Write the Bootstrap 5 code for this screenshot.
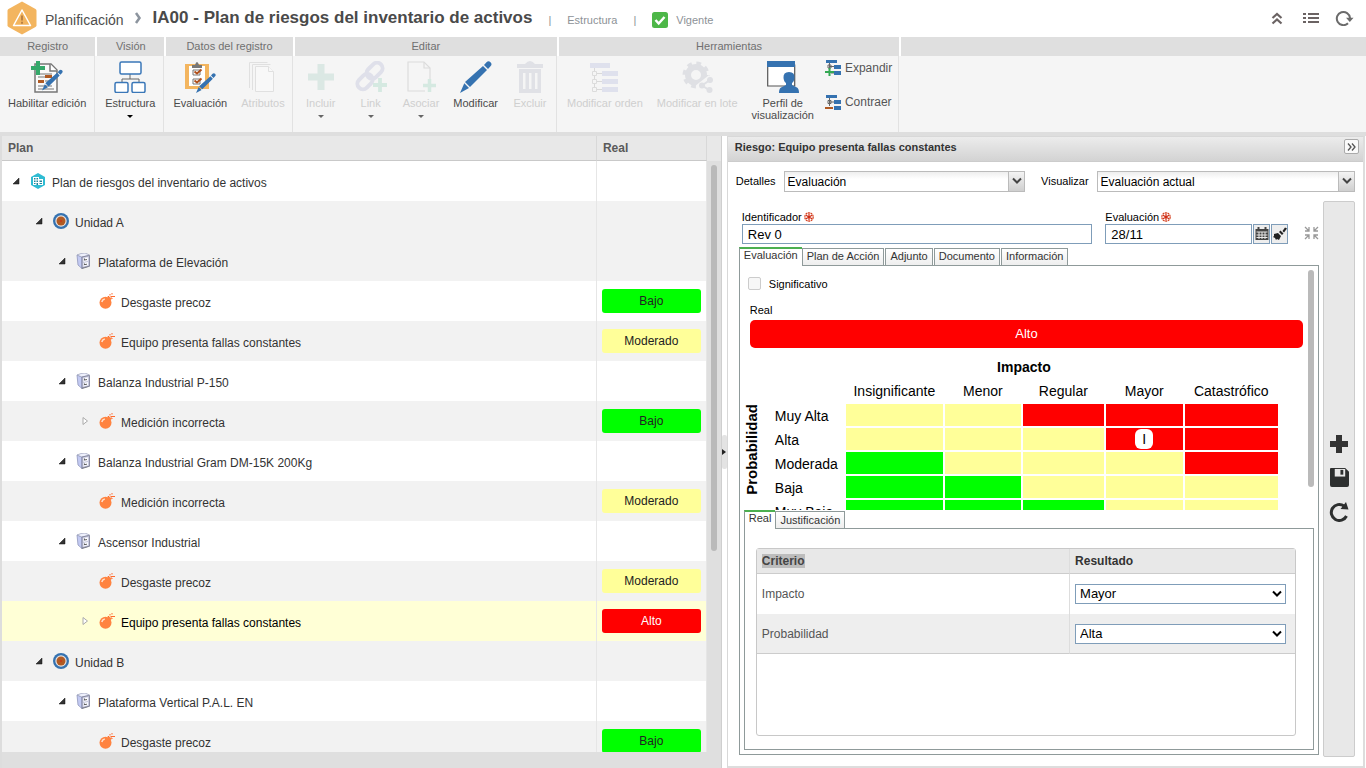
<!DOCTYPE html>
<html lang="es">
<head>
<meta charset="utf-8">
<meta name="viewport" content="width=device-width, initial-scale=1">
<title>IA00 - Plan de riesgos del inventario de activos</title>
<link rel="stylesheet" href="https://cdn.jsdelivr.net/npm/bootstrap@5.3.0/dist/css/bootstrap.min.css">
<style>
body{font-family:"Liberation Sans",Arial,sans-serif;font-size:12px;line-height:16px;color:#333;background:#fff}
svg{display:block;flex:none}
button,input,select{font-family:inherit}
a{text-decoration:none;color:inherit}
.topbar{height:37px;padding:0 12px 0 7px;color:#4d4d4d}
.crumb{font-size:14px}
.topbar h1{font-size:17px;line-height:20px;font-weight:700;color:#4a4a4a;margin:0}
.meta{font-size:11px;color:#8d9297}
.bare{border:0;background:none;padding:0;color:inherit}
/* ribbon */
.ribbon{background:#f5f5f5;border-bottom:4px solid #dedede}
.rgroup-title{height:19px;line-height:18px;background:#dfdfdf;border-right:2px solid #fff;font-size:11px;color:#707070;text-align:center}
.rgroup-body{height:76px;margin-right:2px;border-right:1px solid #e2e2e2;padding:0 1px}
.rgroup-body.tight{padding:0}
.rgroup-body.wide{padding:0 6px 0 1px}
.rbtn{border:0;background:none;padding:5px 7px 0;min-width:50px;font-size:11px;line-height:12px;color:#4a4a4a;display:flex;flex-direction:column;align-items:center;gap:4px}
.rbtn:disabled{color:#cfcfcf}
.rbtn .caret{border:3px solid transparent;border-top-color:#000;border-bottom:0;margin-top:2px}
.rbtn:disabled .caret{border-top-color:#666}
.rsmall{font-size:12px;line-height:16px;color:#555;gap:4px}
.rstack{gap:18px}
/* tree */
.plan-pane{flex:722 1 0;background:#dfdfdf;border-left:2px solid #ddd;border-right:1px solid #cfcfcf}
.tree{border-collapse:separate;border-spacing:0;table-layout:fixed}
.tree col.c-real{width:110px}
.tree th{height:25px;background:#e8e8e8;color:#5a5a5a;padding:0 6px;border-bottom:1px solid #c9c9c9;border-right:1px solid #d8d8d8}
.tree td{height:40px;padding:1px 5px 0;border-right:1px solid #e6e6e6;background:#fff}
.tree .alt td{background:#f2f2f2}
.tree .sel td{background:#ffffd6;color:#000}
.tree td:first-child{padding-left:calc(10px + 23px*var(--d))}
.d0{--d:0}.d1{--d:1}.d2{--d:2}.d3{--d:3}
.node{display:flex;align-items:center}
.node .tw{width:18px;height:10px;display:flex;align-items:center}
.node .txt{margin-left:6px;padding-top:3px}
.risk{display:block;height:24px;line-height:24px;border-radius:3px;text-align:center}
.lo{background:#0f0}.mid{background:#ff9;}.hi{background:red;color:#fff}
.tree .risk.lo,.tree .risk.mid{color:#222}
.track{width:14px;padding:4px 4px 0;border-top:25px solid #e8e8e8}
.thumb{width:6px;border-radius:3px;background:#bababa}
.split{width:5px;background:#fff}
.grip{width:5px;height:34px;background:#e3e3e3;border-radius:2px}
/* detail */
.detail{flex:638 1 0;border:1px solid #d8d8d8;border-right:2px solid #ddd;border-bottom:2px solid #ddd;color:#000;font-size:11px;margin-right:1px;min-width:0}
.detail-head{height:25px;padding:0 4px 4px 7px;background:linear-gradient(#ececec,#d3d3d3);border-bottom:1px solid #ccc;color:#333}
.detail-head h2{font-size:11px;line-height:14px;font-weight:700;margin:0}
.expand{width:15px;height:15px;border:1px solid #aaa;border-radius:2px;background:#fafafa;padding:0;display:flex;align-items:center;justify-content:center}
.selectors{padding:9px 8px 0}
.combo{position:relative;height:21px;border:1px solid #bbb;background:linear-gradient(#eee,#fff 7px)}
.combo.c1{flex:242 1 0}.combo.c2{flex:259 1 0}
.combo select{appearance:none;border:0;background:none;width:100%;height:19px;line-height:19px;font-size:12px;padding:1px 20px 0 3px;color:#000}
.combo .arr{position:absolute;right:0;top:0;width:16px;height:19px;border-left:1px solid #bbb;background:linear-gradient(#f4f4f4,#cfcfcf);color:#444;pointer-events:none;display:flex;align-items:center;justify-content:center}
.detail-body{padding:9px 8px 9px 11px;gap:4px}
.form-col{padding:10px 0 2px}
.fields{padding-left:3px;margin-bottom:3px}
.f-id{flex:351 1 0}.f-ev{flex:183 1 0;margin-left:13px}
.fld{height:20px;border:1px solid #7f9db9;padding:1px 5px 0;font-size:13px;width:100%;color:#000;background:#fff;min-width:0}
.flabel{line-height:13px;display:flex;align-items:center;gap:2px}
.ibtn{width:17px;height:20px;border:1px solid #7f9db9;background:#eee;padding:0;display:flex;align-items:center;justify-content:center;flex:none}
.tabs{gap:1px;padding:0;list-style:none;margin:0 0 -1px;position:relative;align-items:flex-end}
.tabs button{height:18px;border:1px solid #8f9a9a;background:linear-gradient(#fff,#eee);font-size:11px;line-height:14px;padding:0 4px 1px;color:#333;display:block}
.tabs button.active{height:19px;border-bottom:0;border-right:0;border-top:2px solid #4caf50;background:#fff;line-height:12px;padding:0 4px 5px}
.tabs li:first-child{margin-right:-1px}
.box{border:1px solid #8f9a9a}
.mscroll{overflow:hidden;flex:1 1 0;min-height:0}
.bigrisk{height:28px;line-height:28px;border-radius:5px;font-size:13px;text-align:center;margin:2px 5px 0 10px}
.sig-row{padding:10px 0 0 8px}
.real-row{padding:10px 0 0 10px}
.sig{width:13px;height:13px;margin:0;border:1px solid #ccc;border-radius:2px;appearance:none;background:#f7f7f7}
.mtitle{font-size:14px;line-height:22px;font-weight:700;text-align:center}
.matrix{border-collapse:separate;border-spacing:2px;font-size:14px;table-layout:fixed;width:538px;margin-left:2px}
.matrix th,.matrix td{height:22px;padding:0;font-weight:400;line-height:20px}
.matrix thead th{text-align:center}
.matrix tbody th{padding-left:13px;padding-top:2px}
.matrix tbody th.vert{padding:0;vertical-align:top}
.vert span{writing-mode:vertical-rl;transform:rotate(180deg);font-weight:700;font-size:15px;line-height:16px;display:block}
.m1{width:16px}.m2{width:82px}.m3{width:97px}.m4{width:76px}.m5{width:81px}.m6{width:77px}.m7{width:93px}
.pin{display:block;width:18px;height:20px;line-height:20px;margin:auto;background:#fff;border-radius:6px;text-align:center}
.crit{border:1px solid #c8c8c8;border-radius:3px;min-height:188px;margin:19px 17px 13px 11px;font-size:12px}
.crit table{border-collapse:separate;border-spacing:0;table-layout:fixed;width:100%}
.crit col.c-res{width:226px}
.crit th{height:25px;background:#e8e8e8;border-bottom:1px solid #ccc;padding:0 5px;color:#333}
.crit td{height:40px;padding:0 5px;color:#555}
.crit tr:last-child td{background:#eee;border-bottom:1px solid #ccc}
.crit tr>*+*{border-left:1px solid #ddd}
.crit th mark{background:#bdbdbd;color:#444;padding:0}
.crit .sel-wrap{position:relative;width:211px;color:#000}
.crit select{appearance:none;width:100%;height:20px;border:1px solid #7f9db9;font-size:13px;line-height:16px;padding:0 4px;background:#fff;color:#000;display:block}
.crit .sel-wrap svg{position:absolute;right:4px;top:6px;pointer-events:none}
.side{width:32px;background:#e8e8e8;border:1px solid #ccc;border-radius:2px;gap:15px;color:#333}
</style>
</head>
<body class="vh-100 d-flex flex-column overflow-hidden">
<svg width="0" height="0" class="position-absolute" aria-hidden="true">
 <symbol id="plus" viewBox="0 0 26 26"><path d="M9.500 0h7v9.500H26v7h-9.500V26h-7v-9.500H0v-7h9.500z"/></symbol>
 <symbol id="pencil" viewBox="0 0 32 32"><path d="M23 5l4 4L10 26l-5-5zM24 4l2.500-2.800q2-2 4 0t0 4L28 8zM4.300 22.300l4.700 4.700L0 32z"/></symbol>
 <symbol id="open" viewBox="0 0 8 8"><path d="M7 1v6H1z" fill="#333" stroke="#111" stroke-width=".5"/></symbol>
 <symbol id="closed" viewBox="0 0 8 10"><path d="M2 1.500v7L6.500 5z" fill="#fff" stroke="#aaa"/></symbol>
 <symbol id="plan" viewBox="0 0 16 16"><path d="M8 0l7 4v8l-7 4-7-4V4z" fill="#2fbcd3"/><path d="M3 4h6v2h4v6H3z" fill="#fff"/><path d="M4 5h1.500v1.500H4zM6.500 5H8v1.500H6.500zM4 7.500h1.500v1.500H4zM6.500 7.500H8v1.500H6.500zM9.500 7.500h2.500v1.500H9.500zM4 10h1.500v1H4zM6.500 10H8v2H6.500zM9.500 10H12v1H9.500z" fill="#23859a"/></symbol>
 <symbol id="unit" viewBox="0 0 16 16"><circle cx="8" cy="8" r="8" fill="#3572b0"/><circle cx="8" cy="8" r="5.700" fill="#e9e5e2"/><circle cx="8" cy="8" r="4.500" fill="#b05a23"/><circle cx="8" cy="8" r=".7" fill="#e01010"/></symbol>
 <symbol id="asset" viewBox="0 0 16 16"><path d="M5 15l8-2 1 .5-8 2.500z" fill="#777"/><path d="M1 2l5 2v11.500L2 12z" fill="#c3caf2" stroke="#8f95bb" stroke-width=".8"/><path d="M1 2q4-2 8-2l4.500 2L6 4z" fill="#eef0fc" stroke="#9a9fba" stroke-width=".7"/><path d="M6 4l7.500-1.500V13L6 15z" fill="#c9cbdf" stroke="#777a92" stroke-width=".8"/><path d="M7.500 5l4.500-.8v3.600L7.500 9zM7.500 10l4.500-1v3.300l-4.500 1.200z" fill="#fafaff"/><path d="M8.500 7.300V5.500M8.500 7l2.500-.5M8.500 12v-1.500M8.500 11.700l2.500-.5" stroke="#555" stroke-width=".9"/></symbol>
 <symbol id="bomb" viewBox="0 0 16 16"><circle cx="6.500" cy="9.800" r="6" fill="#ff8340"/><path d="M8 4l3.800 3.200 1-1.800L9.500 3z" fill="#ff8340"/><path d="M11 1v1.500M9 3.500h1M11.500 3.500l1 1M12 3.500h4M13 6v-1M13 0v1.500" stroke="#ff6b2e" fill="none"/><path d="M2.800 9q.5-2.500 3-3" stroke="#ffe0cf" stroke-width="1.500" fill="none"/></symbol>
 <symbol id="req" viewBox="0 0 10 10"><circle cx="5" cy="5" r="4.200" fill="none" stroke="#d5401f" stroke-width="1.200" stroke-dasharray="2 .6"/><path d="M5 1.500v7M2 3.200l6 3.600M8 3.200L2 6.800" stroke="#cf2b12" stroke-width="1.200"/></symbol>
 <symbol id="chev" viewBox="0 0 10 8"><path d="M1 1.500l4 4 4-4" fill="none" stroke="currentColor" stroke-width="2"/></symbol>
</svg>

<header class="topbar d-flex align-items-center">
 <svg width="30" height="34" viewBox="0 0 30 34"><path d="M15 .5L28.500 8q1 .6 1 1.800v14.400q0 1.200-1 1.800L15 33.500 1.500 26q-1-.6-1-1.800V9.800q0-1.200 1-1.800z" fill="#f3b55f"/><path d="M15 9l8.500 15.500h-17z" fill="none" stroke="#fff" stroke-width="1.500" stroke-linejoin="round"/><path d="M15 14.500v5M15 20.800v2" stroke="#a9703a" stroke-width="1.500"/></svg>
 <a href="#" class="crumb ms-2 pt-1">Planificación</a>
 <svg class="mx-2" width="13" height="12" viewBox="0 0 13 12"><path d="M4 1l3.500 5L4 11" fill="none" stroke="#8c949e" stroke-width="2.500"/></svg>
 <h1>IA00 - Plan de riesgos del inventario de activos</h1>
 <div class="meta d-flex align-items-center pt-1"><span class="mx-3">|</span><span>Estructura</span><span class="ms-3 me-3">|</span>
 <svg width="16" height="16" viewBox="0 0 16 16"><rect width="16" height="16" rx="2.500" fill="#4db748"/><path d="M3.500 8l3.200 3.500L12.500 5" fill="none" stroke="#fff" stroke-width="2.500"/></svg>
 <span class="ms-1 ps-1">Vigente</span></div>
 <div class="ms-auto d-flex align-items-center gap-3">
  <button class="bare me-1" aria-label="Ocultar"><svg width="12" height="14" viewBox="0 0 12 14"><path d="M1.500 7L6 3l4.500 4M1.500 12.500L6 8.500l4.500 4" fill="none" stroke="#6b6363" stroke-width="2.200"/></svg></button>
  <button class="bare" aria-label="Lista"><svg width="16" height="12" viewBox="0 0 16 12"><path d="M0 2h3M5 2h11M0 6h3M5 6h11M0 10h3M5 10h11" stroke="#6b6363" stroke-width="2"/></svg></button>
  <button class="bare" aria-label="Actualizar"><svg width="19" height="16" viewBox="0 0 19 16"><path d="M13 13.300A6.600 6.600 0 1 1 15 8" fill="none" stroke="#6b6b6b" stroke-width="2"/><path d="M11 7.800h7.500L14.800 12z" fill="#6b6b6b"/></svg></button>
 </div>
</header>

<nav class="ribbon d-flex" aria-label="Acciones">
 <section><div class="rgroup-title">Registro</div><div class="rgroup-body d-flex">
  <button class="rbtn"><svg width="32" height="32" viewBox="0 0 32 32"><path d="M4 3h16l6 6v22H4z" fill="#fafafa" stroke="#777" stroke-width="1.500"/><path d="M19 3v7h7" fill="#fff" stroke="#777" stroke-width="1.500"/><path d="M7 13h14M7 16h10M14 20h8M7 25h14M7 28h16" stroke="#777"/><path d="M14 14h7v3h-7zM7 19h6v3H7z" fill="#b05a23"/><path d="M5 0h4v5h5v4H9v5H5V9H0V5h5z" fill="#34a86a"/><use href="#pencil" x="11" y="8" width="21" height="22" fill="#3572b0"/></svg>Habilitar edición</button>
 </div></section>
 <section><div class="rgroup-title">Visión</div><div class="rgroup-body d-flex">
  <button class="rbtn"><svg width="32" height="32" viewBox="0 0 32 32"><path d="M16 13v5M8 21v-3h17v3" fill="none" stroke="#666"/><g fill="#fff" stroke="#3a77b8" stroke-width="1.500"><rect x="6" y="1" width="21" height="12" rx="1.500"/><rect x="1" y="21.500" width="13" height="10" rx="1.500"/><rect x="18" y="21.500" width="13" height="10" rx="1.500"/></g></svg>Estructura<span class="caret"></span></button>
 </div></section>
 <section><div class="rgroup-title">Datos del registro</div><div class="rgroup-body tight d-flex">
  <button class="rbtn"><svg width="32" height="32" viewBox="0 0 32 32"><path d="M1 3h24v25H1z" fill="#f3b55f"/><path d="M5 5h16v20H5z" fill="#fff"/><path d="M8 4h3q2-6 4 0h3v3H8z" fill="#777"/><path d="M9 9h7v5H9zM9 18h7v5H9z" fill="none" stroke="#777"/><path d="M10.500 10.500l2.500 2 4.500-4M10.500 19.500l2.500 2 4.500-4" fill="none" stroke="#b0501c" stroke-width="2"/><use href="#pencil" x="12" y="12" width="20" height="20" fill="#3572b0"/></svg>Evaluación</button>
  <button class="rbtn" disabled><svg width="32" height="32" viewBox="0 0 32 32" fill="#f8f8f8" stroke="#e0e0e0"><path d="M2.500 27V1.500h18M5.500 29V3.500h18" fill="none"/><path d="M8.500 5.500h13l5 5v20h-18z"/><path d="M21.500 5.500v5h5"/></svg>Atributos</button>
 </div></section>
 <section><div class="rgroup-title">Editar</div><div class="rgroup-body d-flex">
  <button class="rbtn" disabled><svg width="32" height="32" viewBox="0 0 32 32"><use href="#plus" x="3" y="3" width="26" height="26" fill="#dbe8e4"/></svg>Incluir<span class="caret"></span></button>
  <button class="rbtn" disabled><svg width="32" height="32" viewBox="0 0 32 32"><g transform="rotate(-45 15 15)" fill="none" stroke="#dfe0ea" stroke-width="4"><rect x="-1" y="10" width="17" height="11" rx="5.500"/><rect x="13" y="9" width="18" height="11" rx="5.500"/></g><use href="#plus" x="18" y="17" width="14" height="14" fill="#d5e9e1"/></svg>Link<span class="caret"></span></button>
  <button class="rbtn" disabled><svg width="32" height="32" viewBox="0 0 32 32" fill="none" stroke="#dcdcdc" stroke-width="1.200"><path d="M25 18V7l-6-6H3v29h17"/><path d="M19 1v6h6"/><use href="#plus" x="18" y="18" width="13" height="13" fill="#d5e9e1" stroke="none"/></svg>Asociar<span class="caret"></span></button>
  <button class="rbtn"><svg width="32" height="32" fill="#3572b0"><use href="#pencil" width="32" height="32"/></svg>Modificar</button>
  <button class="rbtn" disabled><svg width="32" height="32" viewBox="0 0 32 32" fill="#e0e1e6"><path d="M3 3h8q5-6 10 0h8v4H3z"/><path fill-rule="evenodd" d="M5 8h22v24H5zM9 12v16h2.500V12zm6 0v16h2.500V12zm6 0v16h2.500V12z"/></svg>Excluir</button>
 </div></section>
 <section><div class="rgroup-title">Herramientas</div><div class="rgroup-body wide d-flex">
  <button class="rbtn" disabled><svg width="32" height="32" viewBox="0 0 32 32"><path d="M1 2h20v5H1zM13 10h16v5H13zM13 18h16v5H13zM13 26h16v5H13z" fill="#dfe1ed"/><path d="M5.500 7v4M5.500 14v5M5.500 22v5M8 12.500h5M8 20.500h5M8 28.500h5" stroke="#d9d9d9"/><path d="M3.500 10.500h4v4h-4zM3.500 18.500h4v4h-4zM3.500 26.500h4v4h-4z" fill="none" stroke="#dcdcdc"/></svg>Modificar orden</button>
  <button class="rbtn" disabled><svg width="32" height="32" viewBox="0 0 32 32"><circle cx="15" cy="14" r="8" fill="none" stroke="#dfe0e4" stroke-width="6"/><circle cx="15" cy="14" r="11.500" fill="none" stroke="#dfe0e4" stroke-width="4" stroke-dasharray="4.600 4.430"/><path d="M30 17L21 24l9 5" fill="none" stroke="#f5f5f5" stroke-width="7"/><path d="M29 19L21 24.500 28 29" fill="none" stroke="#dfe0e4" stroke-width="2"/><g fill="#dfe0e4"><circle cx="29" cy="19" r="3"/><circle cx="21" cy="24.500" r="3"/><circle cx="28.500" cy="29" r="3"/></g></svg>Modificar en lote</button>
  <button class="rbtn"><svg width="32" height="32" viewBox="0 0 32 32"><path d="M.7 4h27v21H.7z" fill="#fff" stroke="#555" stroke-width="1.200"/><path d="M0 0h28v6H0z" fill="#3572b0"/><path d="M22 11q6 0 5.500 6-.5 4-2.500 5v2l5 2.500q2 1 2 5.500H12q0-4.500 2-5.500l5-2.500v-2q-2-1-2.500-5-.5-6 5.500-6z" fill="#3572b0"/></svg><span>Perfil de<br>visualización</span></button>
  <div class="rstack d-flex flex-column pt-1">
   <button class="bare rsmall d-flex ms-1"><svg width="16" height="16" viewBox="0 0 16 16"><path d="M1 0h11v3H1zM9 5h7v4H9zM9 11h7v4H9z" fill="#3572b0"/><path d="M4.500 3v10M4.500 6.500H9M6 13h3M3 5h3v3H3z" fill="#fff" stroke="#666"/><path d="M3.500 8h2v3H9v2H5.500v3h-2v-3H0v-2h3.500z" fill="#34a853"/></svg>Expandir</button>
   <button class="bare rsmall d-flex ms-1"><svg width="16" height="16" viewBox="0 0 16 16"><path d="M1 1h11v3H1zM9 6h7v4H9zM9 12h7v4H9z" fill="#3572b0"/><path d="M4.500 4v8M4.500 8H9M3 6.500h3v3H3z" fill="#fff" stroke="#666"/><path d="M0 13h8v2H0z" fill="#b05a23"/></svg>Contraer</button>
  </div>
 </div></section>
 <section class="flex-grow-1"><div class="rgroup-title border-0"></div></section>
</nav>

<main class="d-flex flex-grow-1 overflow-hidden">
 <section class="plan-pane d-flex overflow-hidden" aria-label="Plan">
  <div class="flex-grow-1 overflow-hidden mb-3">
  <table class="tree w-100">
   <colgroup><col><col class="c-real"></colgroup>
   <thead><tr><th>Plan</th><th>Real</th></tr></thead>
   <tbody>
    <tr class="d0"><td><div class="node"><span class="tw"><svg width="8" height="8"><use href="#open"/></svg></span><svg width="16" height="16"><use href="#plan"/></svg><span class="txt">Plan de riesgos del inventario de activos</span></div></td><td></td></tr>
    <tr class="d1 alt"><td><div class="node"><span class="tw"><svg width="8" height="8"><use href="#open"/></svg></span><svg width="16" height="16"><use href="#unit"/></svg><span class="txt">Unidad A</span></div></td><td></td></tr>
    <tr class="d2 alt"><td><div class="node"><span class="tw"><svg width="8" height="8"><use href="#open"/></svg></span><svg width="16" height="16"><use href="#asset"/></svg><span class="txt">Plataforma de Elevación</span></div></td><td></td></tr>
    <tr class="d3"><td><div class="node"><span class="tw"></span><svg width="16" height="16"><use href="#bomb"/></svg><span class="txt">Desgaste precoz</span></div></td><td><span class="risk lo">Bajo</span></td></tr>
    <tr class="d3 alt"><td><div class="node"><span class="tw"></span><svg width="16" height="16"><use href="#bomb"/></svg><span class="txt">Equipo presenta fallas constantes</span></div></td><td><span class="risk mid">Moderado</span></td></tr>
    <tr class="d2"><td><div class="node"><span class="tw"><svg width="8" height="8"><use href="#open"/></svg></span><svg width="16" height="16"><use href="#asset"/></svg><span class="txt">Balanza Industrial P-150</span></div></td><td></td></tr>
    <tr class="d3 alt"><td><div class="node"><span class="tw"><svg width="8" height="10"><use href="#closed"/></svg></span><svg width="16" height="16"><use href="#bomb"/></svg><span class="txt">Medición incorrecta</span></div></td><td><span class="risk lo">Bajo</span></td></tr>
    <tr class="d2"><td><div class="node"><span class="tw"><svg width="8" height="8"><use href="#open"/></svg></span><svg width="16" height="16"><use href="#asset"/></svg><span class="txt">Balanza Industrial Gram DM-15K 200Kg</span></div></td><td></td></tr>
    <tr class="d3 alt"><td><div class="node"><span class="tw"></span><svg width="16" height="16"><use href="#bomb"/></svg><span class="txt">Medición incorrecta</span></div></td><td><span class="risk mid">Moderado</span></td></tr>
    <tr class="d2"><td><div class="node"><span class="tw"><svg width="8" height="8"><use href="#open"/></svg></span><svg width="16" height="16"><use href="#asset"/></svg><span class="txt">Ascensor Industrial</span></div></td><td></td></tr>
    <tr class="d3 alt"><td><div class="node"><span class="tw"></span><svg width="16" height="16"><use href="#bomb"/></svg><span class="txt">Desgaste precoz</span></div></td><td><span class="risk mid">Moderado</span></td></tr>
    <tr class="d3 sel"><td><div class="node"><span class="tw"><svg width="8" height="10"><use href="#closed"/></svg></span><svg width="16" height="16"><use href="#bomb"/></svg><span class="txt">Equipo presenta fallas constantes</span></div></td><td><span class="risk hi">Alto</span></td></tr>
    <tr class="d1 alt"><td><div class="node"><span class="tw"><svg width="8" height="8"><use href="#open"/></svg></span><svg width="16" height="16"><use href="#unit"/></svg><span class="txt">Unidad B</span></div></td><td></td></tr>
    <tr class="d2"><td><div class="node"><span class="tw"><svg width="8" height="8"><use href="#open"/></svg></span><svg width="16" height="16"><use href="#asset"/></svg><span class="txt">Plataforma Vertical P.A.L. EN</span></div></td><td></td></tr>
    <tr class="d3 alt"><td><div class="node"><span class="tw"></span><svg width="16" height="16"><use href="#bomb"/></svg><span class="txt">Desgaste precoz</span></div></td><td><span class="risk lo">Bajo</span></td></tr>
   </tbody>
  </table>
  </div>
  <div class="track"><div class="thumb" style="height:64%"></div></div>
 </section>
 <div class="split d-flex align-items-center"><div class="grip d-flex align-items-center"><svg width="4" height="6" viewBox="0 0 4 6"><path d="M0 0l4 3-4 3z" fill="#222"/></svg></div></div>

 <section class="detail d-flex flex-column">
  <div class="detail-head d-flex align-items-center justify-content-between"><h2>Riesgo: Equipo presenta fallas constantes</h2>
   <button class="expand" aria-label="Ocultar panel"><svg width="9" height="8" viewBox="0 0 9 8"><path d="M1 .5L4 4 1 7.500M5 .5L8 4 5 7.500" fill="none" stroke="#555" stroke-width="1.300"/></svg></button></div>
  <div class="selectors d-flex align-items-center">
   <label for="det">Detalles</label>
   <div class="combo c1 ms-2"><select id="det"><option>Evaluación</option></select><span class="arr"><svg width="10" height="8"><use href="#chev"/></svg></span></div>
   <label for="vis" class="ms-3">Visualizar</label>
   <div class="combo c2 ms-2"><select id="vis"><option>Evaluación actual</option></select><span class="arr"><svg width="10" height="8"><use href="#chev"/></svg></span></div>
  </div>
  <div class="detail-body d-flex flex-grow-1 overflow-hidden">
   <div class="form-col d-flex flex-column flex-grow-1 overflow-hidden">
    <div class="fields d-flex align-items-end">
     <div class="f-id"><label class="flabel" for="ident">Identificador<svg width="10" height="10"><use href="#req"/></svg></label><input id="ident" class="fld" value="Rev 0"></div>
     <div class="f-ev"><label class="flabel" for="fecha">Evaluación<svg width="10" height="10"><use href="#req"/></svg></label>
      <div class="d-flex" style="gap:1px"><input id="fecha" class="fld" value="28/11">
       <button class="ibtn" aria-label="Calendario"><svg width="14" height="14" viewBox="0 0 14 14"><path d="M.5 2h13v11H.5z" fill="#444"/><path d="M3.500 0v3M10.500 0v3" stroke="#444" stroke-width="2"/><path d="M1.500 5h11M1.500 8h11M1.500 10.500h11M4 5v7M7 5v7M10 5v7" stroke="#e8e8e8"/></svg></button>
       <button class="ibtn" aria-label="Limpiar"><svg width="14" height="14" viewBox="0 0 14 14"><path d="M1 7l4-1 3 3-2 4-2-1-1 1-1-2-2-1 1-1zM6 5l1.500-1.500 3 3L9 8zM9.500 4L12 .5l2 1L11 5.500z" fill="#222"/></svg></button></div></div>
     <svg class="ms-3 mb-1" width="15" height="14" viewBox="0 0 15 14" fill="none" stroke="#999" stroke-width="1.300"><path d="M1 1l3.500 3.500M5 1v4H1M14 1l-3.500 3.500M10 1v4h4M1 13l3.500-3.500M5 13V9H1M14 13l-3.500-3.500M10 13V9h4"/></svg>
    </div>
    <ul class="tabs d-flex"><li><button class="active">Evaluación</button></li><li><button>Plan de Acción</button></li><li><button>Adjunto</button></li><li><button>Documento</button></li><li><button>Información</button></li></ul>
    <div class="box d-flex flex-column flex-grow-1 overflow-hidden">
     <div class="mscroll d-flex">
      <div class="flex-grow-1">
       <div class="sig-row d-flex align-items-center gap-2"><input class="sig" type="checkbox" id="sig"><label for="sig">Significativo</label></div>
       <div class="real-row">Real</div>
       <div class="bigrisk hi">Alto</div>
       <div class="mtitle pt-2">Impacto</div>
       <table class="matrix">
        <colgroup><col class="m1"><col class="m2"><col class="m3"><col class="m4"><col class="m5"><col class="m6"><col class="m7"></colgroup>
        <thead><tr><th></th><th></th><th>Insignificante</th><th>Menor</th><th>Regular</th><th>Mayor</th><th>Catastrófico</th></tr></thead>
        <tbody>
        <tr><th class="vert" rowspan="5"><span>Probabilidad</span></th><th>Muy Alta</th><td class="mid"></td><td class="mid"></td><td class="hi"></td><td class="hi"></td><td class="hi"></td></tr>
        <tr><th>Alta</th><td class="mid"></td><td class="mid"></td><td class="mid"></td><td class="hi"><span class="pin text-black">I</span></td><td class="hi"></td></tr>
        <tr><th>Moderada</th><td class="lo"></td><td class="mid"></td><td class="mid"></td><td class="mid"></td><td class="hi"></td></tr>
        <tr><th>Baja</th><td class="lo"></td><td class="lo"></td><td class="mid"></td><td class="mid"></td><td class="mid"></td></tr>
        <tr><th>Muy Baja</th><td class="lo"></td><td class="lo"></td><td class="lo"></td><td class="mid"></td><td class="mid"></td></tr>
        </tbody>
       </table>
      </div>
      <div class="thumb mt-1 me-1" style="height:89%"></div>
     </div>
     <div class="ps-1 pe-1 pb-1">
      <ul class="tabs d-flex"><li><button class="active">Real</button></li><li><button>Justificación</button></li></ul>
      <div class="box">
       <div class="crit"><table>
        <colgroup><col><col class="c-res"></colgroup>
        <thead><tr><th><mark>Criterio</mark></th><th>Resultado</th></tr></thead>
        <tbody>
        <tr><td><label for="imp">Impacto</label></td><td><div class="sel-wrap"><select id="imp"><option>Mayor</option></select><svg width="10" height="8"><use href="#chev"/></svg></div></td></tr>
        <tr><td><label for="prob">Probabilidad</label></td><td><div class="sel-wrap"><select id="prob"><option>Alta</option></select><svg width="10" height="8"><use href="#chev"/></svg></div></td></tr>
        </tbody></table></div>
      </div>
     </div>
    </div>
   </div>
   <div class="side d-flex flex-column align-items-center justify-content-center flex-shrink-0">
    <button class="bare" aria-label="Agregar"><svg width="18" height="18" viewBox="0 0 18 18"><path d="M6 0h6v6h6v6h-6v6H6v-6H0V6h6z" fill="#333"/></svg></button>
    <button class="bare" aria-label="Guardar"><svg width="19" height="19" viewBox="0 0 20 20"><path d="M1 0h15l4 4v14q0 2-2 2H2q-2 0-2-2V1q0-1 1-1z" fill="#2d2f2f"/><path d="M5 1h11v8H5z" fill="#e8e8e8"/><path d="M11 2h3v5h-3z" fill="#2d2f2f"/></svg></button>
    <button class="bare" aria-label="Recargar"><svg width="20" height="20" viewBox="0 0 20 20"><path d="M17.500 14A8 8 0 1 1 15 4" fill="none" stroke="#2d2f2f" stroke-width="3"/><path d="M17 0l2.500 7.500-8-.5z" fill="#2d2f2f"/></svg></button>
   </div>
  </div>
 </section>
</main>
<script src="https://cdn.jsdelivr.net/npm/bootstrap@5.3.0/dist/js/bootstrap.bundle.min.js"></script>
</body>
</html>
